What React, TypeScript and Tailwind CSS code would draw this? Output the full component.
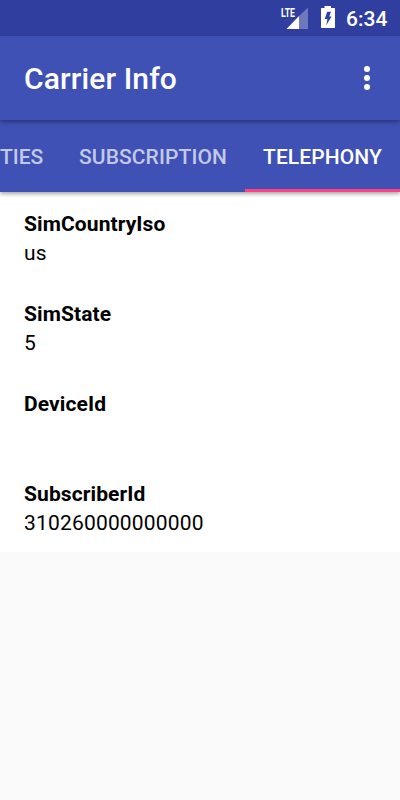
interface InfoItem {
  label: string;
  value: string;
}

const items: InfoItem[] = [
  { label: "SimCountryIso", value: "us" },
  { label: "SimState", value: "5" },
  { label: "DeviceId", value: "" },
  { label: "SubscriberId", value: "310260000000000" },
];

function StatusBar() {
  return (
    <div className="flex h-9 items-center bg-[#303f9f] text-white">
      <svg className="ml-[280px] h-9 w-7" viewBox="0 0 28 36" fill="currentColor">
        <path d="M28 7.5V29H19V16Z" opacity=".3" />
        <path d="M19 16V29H6.5Z" />
        <text x="1" y="17" fontSize="13.5" fontWeight="700" fontFamily="Roboto" textLength="14" lengthAdjust="spacingAndGlyphs">LTE</text>
      </svg>
      <svg className="ml-3 h-9 w-4" viewBox="0 0 16 36" fill="currentColor">
        <path fillRule="evenodd" d="M1.5 8H4.5V6H11V8H14.5L15 8.5V27.5L14.5 28H1.5L1 27.5V8.5ZM7.2 11.7L4.7 19H7.4L6.3 25.3L11.5 16.5H9.3L11 11.7Z" />
      </svg>
      <span className="ml-2.5 pt-0.5 font-medium text-[21px] leading-9">6:34</span>
    </div>
  );
}

function Toolbar() {
  return (
    <div className="relative z-10 flex h-[84px] items-center justify-between bg-[#3f51b5] pl-6 pr-[29px] text-white shadow-[0_2px_4px_rgba(0,0,0,0.35)]">
      <h1 className="text-[30px] font-medium tracking-[0.12px]">Carrier Info</h1>
      <svg className="h-6 w-2" viewBox="0 0 8 24" fill="currentColor">
        <circle cx="4" cy="3" r="3" />
        <circle cx="4" cy="12" r="3" />
        <circle cx="4" cy="21" r="3" />
      </svg>
    </div>
  );
}

function Tabs() {
  return (
    <div className="relative flex h-[72px] justify-end bg-[#3f51b5] text-[21px] leading-[74px] font-medium text-white/70 shadow-[0_2px_4px_rgba(0,0,0,0.35)]">
      <span className="w-[61px] pr-[18px] text-right">TIES</span>
      <span className="w-[184px] text-center tracking-[0.1px]">SUBSCRIPTION</span>
      <span className="w-[155px] border-b-[3px] border-[#ff4081] text-center tracking-[0.1px] text-white">TELEPHONY</span>
    </div>
  );
}

export default function App() {
  return (
    <div className="h-[800px] w-[400px] overflow-hidden bg-[#fafafa] font-['Roboto',sans-serif] text-black">
      <StatusBar />
      <Toolbar />
      <Tabs />
      <main className="bg-white">
        {items.map((item) => (
          <section key={item.label} className="h-[90px] px-6 pt-[18px] text-[21px] leading-[29px]">
            <h2 className="font-bold tracking-[0.1px]">{item.label}</h2>
            <p className="tracking-[0.18px]">{item.value}</p>
          </section>
        ))}
      </main>
    </div>
  );
}
